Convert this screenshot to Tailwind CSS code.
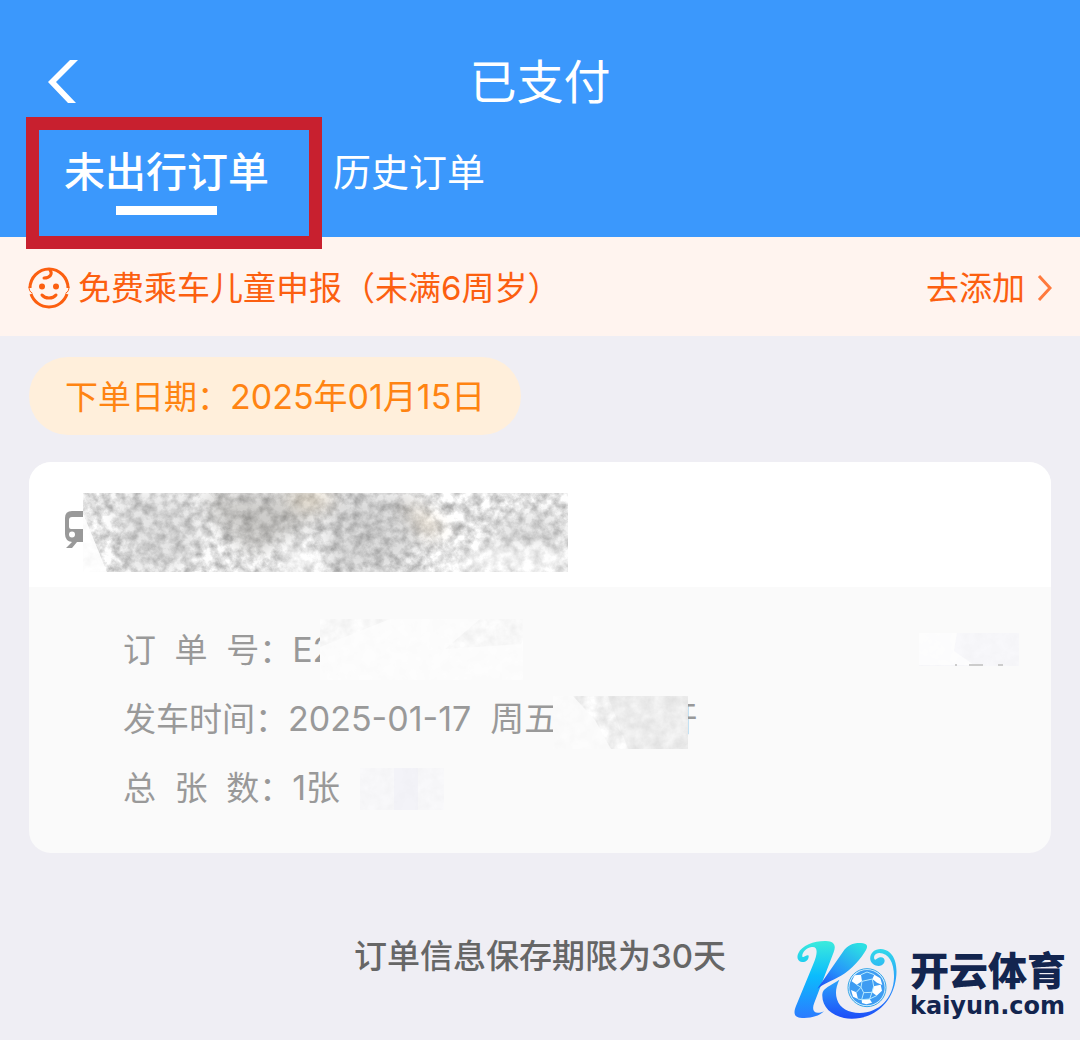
<!DOCTYPE html>
<html lang="zh-CN">
<head>
  <meta charset="UTF-8" />
  <meta name="viewport" content="width=device-width, initial-scale=1.0" />
  <title>已支付</title>
  <script src="https://cdn.jsdelivr.net/npm/@tailwindcss/browser@4"></script>
</head>
<body class="relative min-h-screen bg-[#efeef4] font-['Inter','Noto_Sans_CJK_SC',sans-serif] text-[33px] leading-[46px]">

  <header class="bg-[#3b98fc] pt-12 text-white">
    <div class="relative flex h-[68px] items-center justify-center">
      <button aria-label="返回" class="absolute left-12 top-3">
        <svg class="block" width="30" height="43" viewBox="0 0 30 43" fill="#fff"><path d="M22 0H30L8 22L28 43H20L0 22Z" /></svg>
      </button>
      <h1 class="text-[47px]">已支付</h1>
    </div>
    <nav class="flex items-start gap-16 px-16">
      <button class="relative flex flex-col items-center pt-7 pb-[22px]">
        <span class="text-[41px] leading-[56px] font-medium">未出行订单</span>
        <span class="mt-[6px] h-[9px] w-[101px] bg-white"></span>
        <span class="absolute top-px -right-[53px] -bottom-3 -left-[38px] border-[13px] border-[#c8202f]"></span>
      </button>
      <button class="pt-7 text-[38px] leading-[56px]">历史订单</button>
    </nav>
  </header>

  <!-- 儿童申报 -->
  <section class="flex items-center justify-between bg-[#fff4ef] px-7 pt-7 pb-[25px] text-[#fc5f10]">
    <div class="flex items-center gap-2">
      <svg class="shrink-0" width="42" height="42" viewBox="0 0 42 42" fill="none" stroke="currentColor" stroke-width="3" stroke-linecap="round">
        <path d="M2 21A19 19 0 0 1 40 21" stroke-linecap="butt" />
        <path d="M3 27A19 19 0 0 0 39 27" stroke-linecap="butt" />
        <path d="M1 20C1 23 2 25 4 26M41 20C41 23 40 25 38 26" stroke-width="1" />
        <path d="M22 3C25 7 22 11 16 11" />
        <path d="M14 28C17 32 25 32 28 28" />
        <circle cx="14" cy="19.500" r="3" fill="currentColor" stroke="none" />
        <circle cx="28" cy="19.500" r="3" fill="currentColor" stroke="none" />
      </svg>
      <span>免费乘车儿童申报（未满6周岁）</span>
    </div>
    <a href="#" class="flex items-center gap-3">去添加
      <svg width="15" height="26" viewBox="0 0 15 26" fill="none" stroke="#ff7a3d" stroke-width="3"><path d="M2 1L13 13L2 25" /></svg>
    </a>
  </section>

  <main class="px-[29px] pt-[21px]">
    <div class="inline-block rounded-full bg-[#ffefdb] px-9 pt-[17px] pb-[15px] text-[#ff8412]">下单日期：<span class="text-[34px]">2025年01月15日</span></div>

    <article class="mt-[27px] overflow-hidden rounded-[22px] bg-[#fafafa] text-[#999]">
      <div class="flex h-[125px] items-start bg-white pl-9 pt-[31px]">
        <svg class="mt-[18px] -mr-[18px] shrink-0" width="36" height="38" viewBox="0 0 36 38" fill="#999">
          <path fill-rule="evenodd" d="M7 0H29Q36 0 36 7V23Q36 30 29 31L34 37H29L24 31H12L7 37H1L7 31Q0 30 0 23V7Q0 0 7 0ZM7 6Q4 6 4 9V16Q4 18 6 18H30Q32 18 32 16V9Q32 6 29 6ZM7 20.500A3 3 0 1 0 7 26.500A3 3 0 0 0 7 20.500Z" />
        </svg>
        <svg class="relative shrink-0" width="485" height="79" viewBox="0 0 485 79">
          <defs>
            <filter id="grain" x="0" y="0" width="100%" height="100%" color-interpolation-filters="sRGB">
              <feTurbulence type="fractalNoise" baseFrequency="0.1" numOctaves="5" seed="21" />
              <feColorMatrix values="0.6 0 0 0 0.59  0.6 0 0 0 0.59  0.6 0 0 0 0.59  0 0 0 0 1" />
            </filter>
            <filter id="soft" x="-30%" y="-30%" width="160%" height="160%"><feGaussianBlur stdDeviation="9" /></filter>
            <filter id="pale" x="0" y="0" width="100%" height="100%" color-interpolation-filters="sRGB">
              <feTurbulence type="fractalNoise" baseFrequency="0.09" numOctaves="4" seed="4" />
              <feColorMatrix values="0.18 0 0 0 0.86  0.18 0 0 0 0.86  0.18 0 0 0 0.86  0 0 0 0 1" />
            </filter>
          </defs>
          <rect width="485" height="79" filter="url(#grain)" />
          <g filter="url(#soft)">
            <path d="M120 0H240L225 35L170 62L130 28Z" fill="#84827c" opacity=".4" />
            <path d="M240 0H330L345 40L310 79H245Z" fill="#888" opacity=".3" />
            <path d="M30 0H110L120 50L90 79H45Z" fill="#aaa" opacity=".3" />
            <path d="M420 20H485V52H400Z" fill="#aaa" opacity=".3" />
            <path d="M350 79L410 52L485 58V79ZM190 79L215 45L240 79Z" fill="#fff" opacity=".65" />
            <path d="M205 0H245V12H215ZM320 8L365 38L345 40Z" fill="#f7d9a8" opacity=".4" />
          </g>
          <path d="M0 20L24 79H0Z" fill="#fff" opacity=".9" />
        </svg>
      </div>

      <div class="flex flex-col gap-[23px] px-[94px] pt-10 pb-[42px]">
        <div class="relative"><span class="whitespace-pre">订  单  号：</span><span class="text-[34px]">E2</span>
          <svg class="absolute -top-2 left-[197px]" width="203" height="61" viewBox="0 0 203 61">
            <rect width="203" height="61" filter="url(#pale)" />
            <path d="M0 28L70 0H160L125 30L203 25V61H0Z" fill="#fcfcfc" opacity=".8" />
            <rect width="203" height="61" fill="#fdfdfd" opacity=".5" />
          </svg>
          <svg class="absolute top-[6px] -right-[62px]" width="100" height="33" viewBox="0 0 100 33">
            <rect width="100" height="33" filter="url(#pale)" />
            <rect width="100" height="33" fill="#f7f7fa" opacity=".85" />
            <path d="M0 0H38L35 18L55 32H0Z" fill="#fdfdfd" opacity=".9" />
            <path d="M36 32H38M50 32H64M79 32H84" stroke="#ccc" stroke-width="2" />
          </svg>
        </div>
        <div class="relative"><span>发车时间：</span><span class="text-[34px] whitespace-pre">2025-01-17  周五           开</span>
          <svg class="absolute top-0 left-[430px]" width="135" height="53" viewBox="0 0 135 53">
            <rect width="135" height="53" filter="url(#pale)" />
            <path d="M0 0H20L42 24L58 53H0Z" fill="#fbfbfb" opacity=".85" />
            <path d="M55 0H135V53H75Z" fill="#ddd" opacity=".3" />
          </svg>
        </div>
        <div class="relative"><span class="whitespace-pre">总  张  数：</span><span class="text-[34px]">1张</span>
          <svg class="absolute top-[3px] left-[237px]" width="84" height="42" viewBox="0 0 84 42">
            <rect width="84" height="42" filter="url(#pale)" />
            <rect width="84" height="42" fill="#f7f7fa" opacity=".8" />
            <path d="M34 0H58V42H34Z" fill="#ededf5" opacity=".5" />
          </svg>
        </div>
      </div>
    </article>

    <p class="mt-20 text-center font-medium text-[#666]">订单信息保存期限为30天</p>
  </main>

  <!-- 水印 -->
  <div class="absolute top-[940px] right-[14px] flex gap-3 text-[#13254f]">
    <svg width="105" height="80" viewBox="40 30 315 240">
      <defs>
        <linearGradient id="stem" x1="0" y1="0" x2="0" y2="1"><stop offset="0" stop-color="#3cebdc" /><stop offset=".45" stop-color="#0bbcfd" /><stop offset="1" stop-color="#2b7bff" /></linearGradient>
        <linearGradient id="arm" x1=".8" y1="0" x2=".1" y2="1"><stop offset="0" stop-color="#2ce0e3" /><stop offset=".6" stop-color="#2694fb" /><stop offset="1" stop-color="#1f50f5" /></linearGradient>
        <linearGradient id="swoosh" x1="0" y1="0" x2="0" y2="1"><stop offset="0" stop-color="#31d9ea" /><stop offset=".5" stop-color="#2a9bfb" /><stop offset="1" stop-color="#1d4df8" /></linearGradient>
      </defs>
      <path fill="url(#stem)" d="M87 77C88 90 78 97 67 96C54 94 50 82 56 70C66 46 105 32 139 33C164 34 170 46 162 67L104 218C94 243 105 256 133 244C117 261 83 266 61 263C43 261 41 248 49 228L101 102C114 72 116 48 96 51C78 54 66 70 68 80C75 84 80 73 87 77Z" />
      <path fill="url(#arm)" d="M113 176L190 65C203 45 222 38 244 39C262 40 266 48 259 60C246 83 216 119 184 137C157 153 132 160 113 176Z" />
      <path fill="url(#swoosh)" d="M179 149C169 171 166 189 172 208C180 235 207 249 240 249C297 249 342 205 343 142C344 98 327 68 298 69C286 70 281 78 284 87C287 93 293 84 301 82C313 80 318 91 313 99C307 110 291 110 281 103C268 94 269 76 280 65C293 54 315 54 331 68C352 87 355 128 345 165C328 229 275 267 215 266C163 265 125 235 128 192C129 174 155 166 179 149Z" />
      <circle cx="262" cy="173" r="57" fill="#d9f3ff" stroke="#35a4e8" stroke-width="3" />
      <circle cx="262" cy="173" r="53" fill="#3e9cf2" />
      <g fill="#fff"><path d="M225 136L244 134L247 154L231 164L216 154ZM284 134L302 145L308 165L292 158L278 147ZM214 180L230 187L235 207L220 200ZM282 169L303 164L307 182L291 197L277 187ZM246 209L270 207L277 218L260 223L247 219Z" /></g>
      <path d="M247 154L278 147L282 169L277 187L270 207L246 209L235 207M247 154L244 172L230 187M244 134L262 126L284 134M277 187L252 188L244 172M252 188L246 209M231 164L244 172M291 197L270 207" fill="none" stroke="#b9ebff" stroke-width="3" />
    </svg>
    <div class="mt-1">
      <div class="font-['Noto_Sans_CJK_SC',sans-serif] text-[39px] leading-[48px] font-black">开云体育</div>
      <div class="font-['DejaVu_Sans',sans-serif] text-[24px] leading-7 font-bold">kaiyun.com</div>
    </div>
  </div>

</body>
</html>
